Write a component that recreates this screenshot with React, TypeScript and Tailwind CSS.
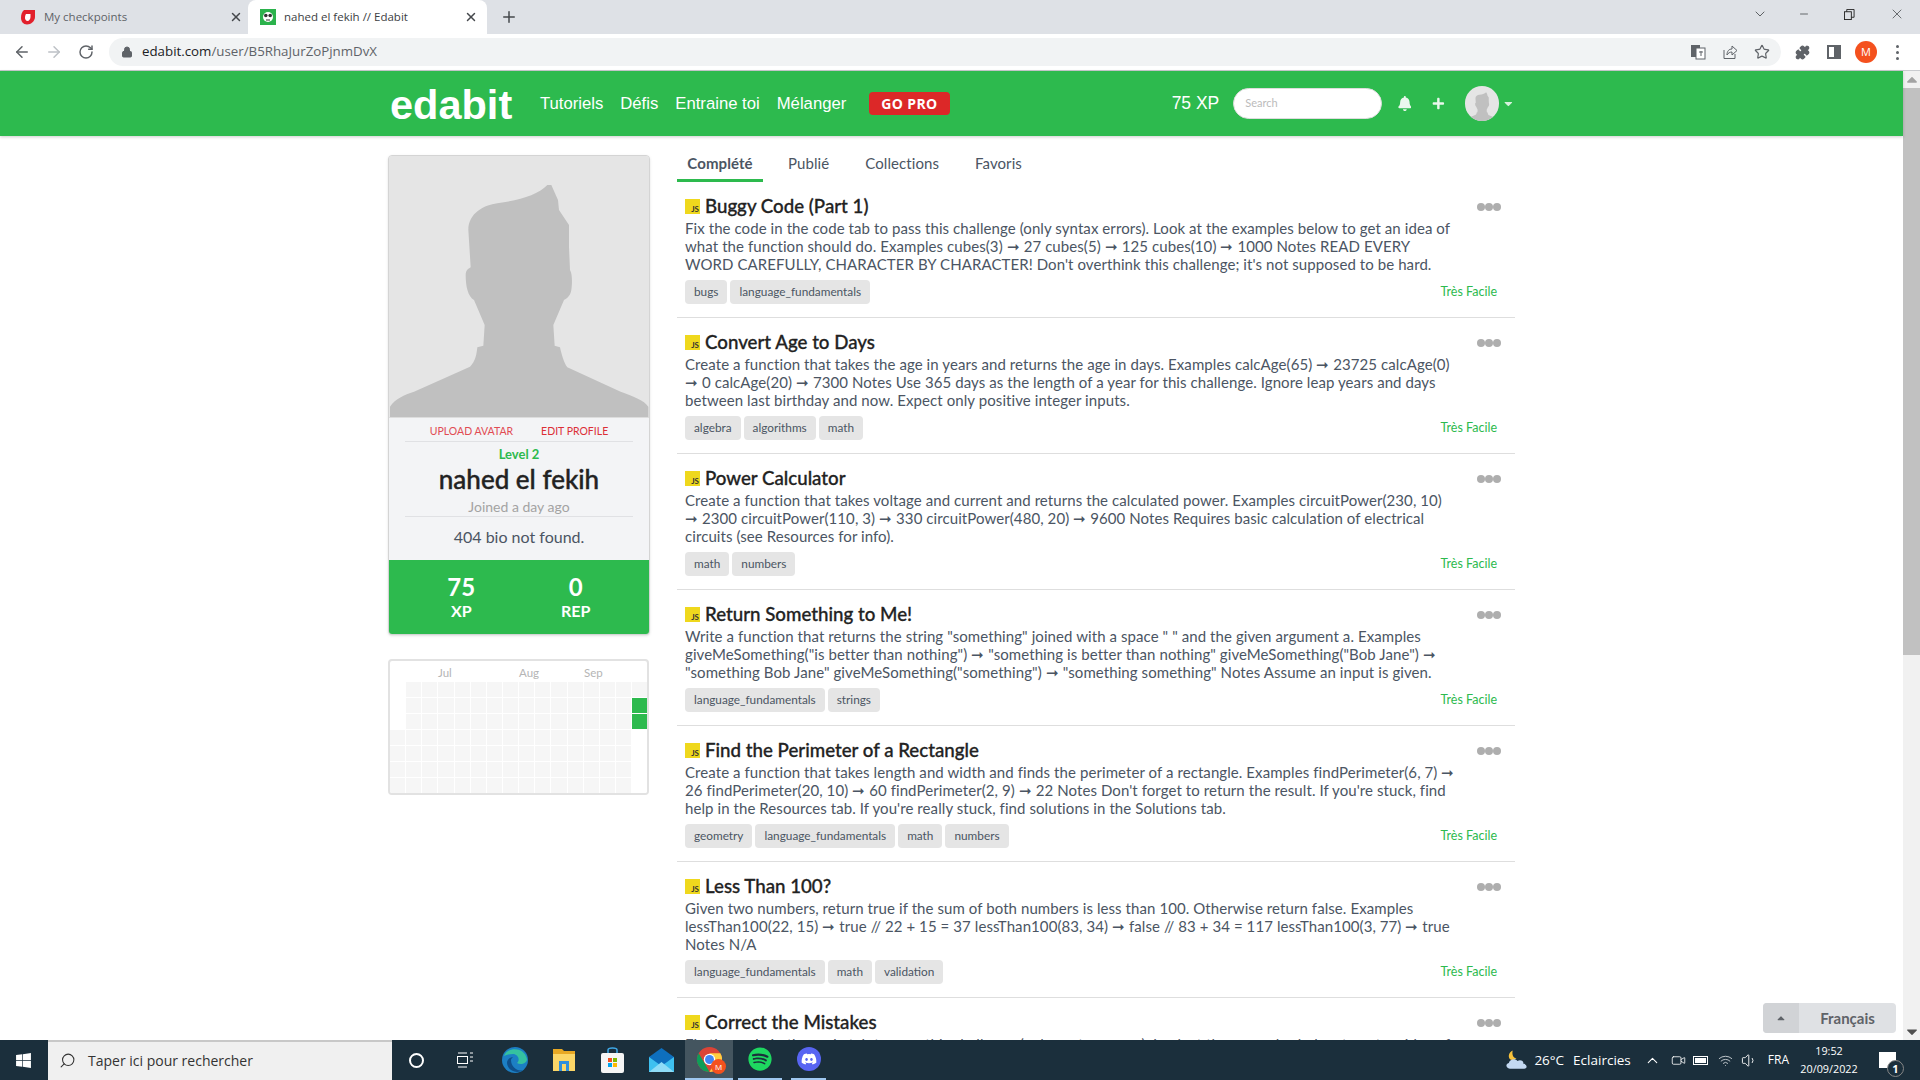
import { ArrowLeft, ArrowRight, RotateCw, Lock, X, Plus, ChevronDown, Minus, Star, Puzzle, Search, ChevronUp, Wifi, Volume1, Video } from 'lucide-react'
import { FaBell, FaPlus, FaWindows, FaSpotify, FaDiscord, FaCaretDown, FaCaretUp } from 'react-icons/fa'

type Challenge = {
    title: string
    description: string
    tags: string[]
}

const challenges: Challenge[] = [
    {
        title: 'Buggy Code (Part 1)',
        description: "Fix the code in the code tab to pass this challenge (only syntax errors). Look at the examples below to get an idea of what the function should do. Examples cubes(3) ➞ 27 cubes(5) ➞ 125 cubes(10) ➞ 1000 Notes READ EVERY WORD CAREFULLY, CHARACTER BY CHARACTER! Don't overthink this challenge; it's not supposed to be hard.",
        tags: ['bugs', 'language_fundamentals'],
    },
    {
        title: 'Convert Age to Days',
        description: 'Create a function that takes the age in years and returns the age in days. Examples calcAge(65) ➞ 23725 calcAge(0) ➞ 0 calcAge(20) ➞ 7300 Notes Use 365 days as the length of a year for this challenge. Ignore leap years and days between last birthday and now. Expect only positive integer inputs.',
        tags: ['algebra', 'algorithms', 'math'],
    },
    {
        title: 'Power Calculator',
        description: 'Create a function that takes voltage and current and returns the calculated power. Examples circuitPower(230, 10) ➞ 2300 circuitPower(110, 3) ➞ 330 circuitPower(480, 20) ➞ 9600 Notes Requires basic calculation of electrical circuits (see Resources for info).',
        tags: ['math', 'numbers'],
    },
    {
        title: 'Return Something to Me!',
        description: 'Write a function that returns the string "something" joined with a space " " and the given argument a. Examples giveMeSomething("is better than nothing") ➞ "something is better than nothing" giveMeSomething("Bob Jane") ➞ "something Bob Jane" giveMeSomething("something") ➞ "something something" Notes Assume an input is given.',
        tags: ['language_fundamentals', 'strings'],
    },
    {
        title: 'Find the Perimeter of a Rectangle',
        description: "Create a function that takes length and width and finds the perimeter of a rectangle. Examples findPerimeter(6, 7) ➞ 26 findPerimeter(20, 10) ➞ 60 findPerimeter(2, 9) ➞ 22 Notes Don't forget to return the result. If you're stuck, find help in the Resources tab. If you're really stuck, find solutions in the Solutions tab.",
        tags: ['geometry', 'language_fundamentals', 'math', 'numbers'],
    },
    {
        title: 'Less Than 100?',
        description: 'Given two numbers, return true if the sum of both numbers is less than 100. Otherwise return false. Examples lessThan100(22, 15) ➞ true // 22 + 15 = 37 lessThan100(83, 34) ➞ false // 83 + 34 = 117 lessThan100(3, 77) ➞ true Notes N/A',
        tags: ['language_fundamentals', 'math', 'validation'],
    },
    {
        title: 'Correct the Mistakes',
        description: 'Fix the code in the code tab to pass this challenge (only syntax errors). Look at the examples below to get an idea of what the function should do.',
        tags: ['bugs'],
    },
]

function Silhouette({ className }: { className?: string }) {
    return (
        <svg viewBox="25 18 780 783" className={className} preserveAspectRatio="none">
            <path
                fill="#c0c0c0"
                d="M28 801 L28 770 C45 745 70 735 100 725 L268 650 C285 635 288 610 290 592 L308 587 L312 525 L280 450 C262 440 255 410 255 375 C255 360 265 355 270 352 L263 240 C263 190 310 165 350 160 C420 150 470 135 500 105 L512 105 L532 150 L535 180 L565 225 L565 290 L568 360 C575 370 575 400 572 420 C570 435 560 445 550 450 L518 525 L522 587 L538 592 C542 610 550 640 560 652 L720 725 C760 740 790 750 803 770 L803 801 Z"
            />
        </svg>
    )
}

function BrowserChrome() {
    return (
        <div className="shrink-0 font-['Open_Sans',sans-serif]">
            <div className="h-[34px] bg-[#dee1e6] flex items-end relative">
                <div className="w-[248px] h-[34px] flex items-center pl-[20px] text-[11.5px] text-[#5f6368]">
                    <svg viewBox="0 0 16 16" className="w-4 h-4 shrink-0">
                        <path fill="#e2202c" d="M4 1 H15 V8 C15 12 11 15.500 7 15.500 C3 15.500 1 12 1 9 C1 5 2 3 4 1 Z" />
                        <path fill="#fff" d="M6 5 H10.500 V8 C10.500 10 9 12 7.500 12 C6 12 5 10.500 5 9 C5 7 5.300 6 6 5 Z" />
                    </svg>
                    <span className="ml-[8px] flex-1">My checkpoints</span>
                    <X className="w-[14px] h-[14px] mr-[5px] text-[#45484c]" strokeWidth={2.5} />
                </div>
                <div className="w-[239px] h-[34px] bg-white rounded-t-lg flex items-center pl-[12px] text-[11.5px] text-[#3c4043]">
                    <svg viewBox="0 0 16 16" className="w-4 h-4 shrink-0">
                        <rect width="16" height="16" fill="#2bb24c" />
                        <circle cx="8" cy="8" r="5" fill="#fff" />
                        <circle cx="5.800" cy="6.500" r="1.800" fill="#333" />
                        <circle cx="10.200" cy="6.500" r="1.800" fill="#333" />
                        <path d="M6 11 H10" stroke="#333" strokeWidth="1" />
                    </svg>
                    <span className="ml-[8px] flex-1">nahed el fekih // Edabit</span>
                    <X className="w-[14px] h-[14px] mr-[9px] text-[#45484c]" strokeWidth={2.5} />
                </div>
                <div className="h-[34px] flex items-center ml-[13px]">
                    <Plus className="w-[18px] h-[18px] text-[#45484c]" strokeWidth={2} />
                </div>
                <div className="flex-1" />
                <div className="h-[34px] flex items-center text-[#3c4043] pb-[6px]">
                    <ChevronDown className="w-[16px] h-[16px] mr-[30px]" strokeWidth={1.2} />
                    <Minus className="w-[12px] h-[12px] mr-[34px]" strokeWidth={1.5} />
                    <svg viewBox="0 0 12 12" className="w-[11px] h-[11px] mr-[34px]" fill="none" stroke="#222">
                        <rect x="0.500" y="3" width="7.500" height="8.500" />
                        <path d="M3 3 V0.500 H11 V9 H8" />
                    </svg>
                    <X className="w-[16px] h-[16px] mr-[15px]" strokeWidth={1.1} />
                </div>
            </div>
            <div className="h-[37px] bg-white flex items-center border-b border-[#c9cbcf]">
                <ArrowLeft className="w-[18px] h-[18px] ml-[13px] text-[#5f6368]" strokeWidth={2} />
                <ArrowRight className="w-[18px] h-[18px] ml-[14px] text-[#bdc1c6]" strokeWidth={2} />
                <RotateCw className="w-[16px] h-[16px] ml-[15px] text-[#5f6368]" strokeWidth={2.2} />
                <div className="ml-[15px] w-[1672px] h-[28px] rounded-full bg-[#f1f3f4] flex items-center pl-[12px] relative">
                    <Lock className="w-[12px] h-[12px] text-[#5f6368] fill-[#5f6368]" />
                    <span className="ml-[9px] text-[13.3px] text-[#5f6368]">
                        <span className="text-[#202124]">edabit.com</span>/user/B5RhaJurZoPjnmDvX
                    </span>
                    <div className="absolute right-[11px] top-0 h-full flex items-center gap-[16px] text-[#5f6368]">
                        <svg viewBox="0 0 16 16" className="w-4 h-4">
                            <rect x="1" y="1" width="9" height="12" fill="#5f6368" />
                            <rect x="6" y="4" width="9" height="11" fill="#fff" stroke="#5f6368" />
                            <path d="M9 8 H13 M11 7 V12" stroke="#5f6368" />
                        </svg>
                        <svg viewBox="0 0 16 16" className="w-4 h-4" fill="none" stroke="#5f6368">
                            <path d="M2 6 V14.500 H13 V10 M5 11 C5 7 7 5 10 5 V2 L15 6.500 L10 11 V8 C8 8 6 9 5 11 Z" />
                        </svg>
                        <Star className="w-[16px] h-[16px]" strokeWidth={1.8} />
                    </div>
                </div>
                <Puzzle className="w-[15px] h-[15px] ml-[14px] text-[#5f6368] fill-[#5f6368]" />
                <div className="w-[14px] h-[14px] ml-[17px] border-2 border-[#5f6368] flex justify-end">
                    <div className="w-[5px] h-full bg-[#5f6368]" />
                </div>
                <div className="w-[22px] h-[22px] ml-[14px] rounded-full bg-[#f4511e] text-white text-[11px] flex items-center justify-center">M</div>
                <div className="ml-[19px] flex flex-col gap-[3px]">
                    <div className="w-[3px] h-[3px] rounded-full bg-[#5f6368]" />
                    <div className="w-[3px] h-[3px] rounded-full bg-[#5f6368]" />
                    <div className="w-[3px] h-[3px] rounded-full bg-[#5f6368]" />
                </div>
            </div>
        </div>
    )
}

function TopNav() {
    return (
        <nav className="h-[65px] shrink-0 bg-[#2dba4e] shadow-[0_1px_3px_rgba(0,0,0,0.2)] flex items-center relative">
            <div className="w-[1127px] mx-auto flex items-center font-['Liberation_Sans',sans-serif] text-white whitespace-nowrap">
                <span className="w-[155px] pl-[2px] pt-[2px] text-[41.500px] leading-none font-bold">edabit</span>
                <div className="flex gap-[17px] text-[16.700px]">
                    <span>Tutoriels</span>
                    <span>Défis</span>
                    <span>Entraine toi</span>
                    <span>Mélanger</span>
                </div>
                <span className="ml-[23px] w-[82px] h-[23px] rounded bg-[#dc2828] font-['Open_Sans',sans-serif] text-[14px] font-bold tracking-wide flex items-center justify-center">GO PRO</span>
                <span className="ml-[222px] text-[17.500px]">75 XP</span>
                <div className="ml-[14px] w-[151px] h-[31px] rounded-full bg-white border border-[#ddd] flex items-center pl-[11px] font-['Lato',sans-serif] text-[11px] text-[#bbb]">Search</div>
                <FaBell className="ml-[16px] w-[14px] h-[15px] text-[#eaf7ed]" />
                <FaPlus className="ml-[21px] w-[13px] h-[13px] text-[#eaf7ed]" />
                <div className="ml-[20px] w-[35px] h-[35px] rounded-full bg-[#e5e5e5] overflow-hidden flex items-end">
                    <Silhouette className="w-full h-[32px]" />
                </div>
                <FaCaretDown className="ml-[3px] w-[13px] h-[13px] text-[#d5f1dc]" />
            </div>
        </nav>
    )
}

function ProfileCard() {
    return (
        <div className="w-[262px] rounded border border-[#d4d4d4] bg-[#f3f4f6] overflow-hidden shadow-sm">
            <div className="h-[262px] bg-[#e5e5e5] border-b border-[#ddd]">
                <Silhouette className="w-full h-full" />
            </div>
            <div className="flex justify-center gap-[28px] pt-[7px] h-[23px] text-[10.5px] leading-[13px] text-[#e14b52]">
                <span>UPLOAD AVATAR</span>
                <span className="text-[#dc2f36]">EDIT PROFILE</span>
            </div>
            <div className="mx-4 border-t border-[#e0e1e4] text-center">
                <div className="mt-[4px] text-[13px] leading-[17px] font-bold text-[#2dba4e]">Level 2</div>
                <div className="text-[26px] leading-[32px] font-medium text-[#222] [-webkit-text-stroke:0.4px_#222]">nahed el fekih</div>
                <div className="mt-[3px] text-[14px] leading-[18px] text-[#a3a3a3]">Joined a day ago</div>
            </div>
            <div className="mx-4 border-t border-[#e0e1e4] text-center text-[16px] leading-[20px] text-[#4b5563] pt-[10px] pb-[13px]">404 bio not found.</div>
            <div className="h-[74px] bg-[#2dba4e] grid grid-cols-2 text-white font-bold text-center pl-[15px] pr-[16px] pt-[13px]">
                <div>
                    <div className="text-[24px] leading-[28px]">75</div>
                    <div className="text-[16px] leading-[19px]">XP</div>
                </div>
                <div>
                    <div className="text-[24px] leading-[28px]">0</div>
                    <div className="text-[16px] leading-[19px]">REP</div>
                </div>
            </div>
        </div>
    )
}

function Heatmap() {
    const cells = Array.from({ length: 16 * 7 }, (_, i) => i)

    return (
        <div className="mt-[24px] w-[261px] h-[136px] rounded border-2 border-[#e2e2e2] relative overflow-hidden">
            <div className="h-[21px] relative text-[11.500px] leading-[24px] text-[#b5b5b5]">
                <span className="absolute left-[48px]">Jul</span>
                <span className="absolute left-[129px]">Aug</span>
                <span className="absolute left-[194px]">Sep</span>
            </div>
            <div className="grid grid-cols-[repeat(16,15.15px)] auto-rows-[15px] gap-px">
                {cells.map((i) => {
                    const col = i % 16
                    const row = Math.floor(i / 16)
                    const empty = (col === 0 && row < 3) || (col === 15 && row > 2)
                    const done = col === 15 && (row === 1 || row === 2)
                    return (
                        <div
                            key={i}
                            className={empty ? 'bg-white' : done ? 'bg-[#2dba4e]' : 'bg-[#f6f6f6]'}
                        />
                    )
                })}
            </div>
        </div>
    )
}

function ChallengeRow({ challenge }: { challenge: Challenge }) {
    return (
        <div className="h-[136px] shrink-0 border-b border-[#dedede] px-2 pt-[12px] relative">
            <div className="flex items-center h-[24px]">
                <div className="w-[15px] h-[15px] bg-[#efd81d] flex items-end justify-end pr-px text-[8px] leading-[10px] font-bold text-[#333]">JS</div>
                <span className="ml-[5px] text-[18.700px] leading-[24px] font-medium text-[#222] [-webkit-text-stroke:0.3px_#222]">{challenge.title}</span>
            </div>
            <div className="absolute right-[14px] top-[21px] flex">
                <div className="w-[8px] h-[8px] rounded-full bg-[#aeaeae]" />
                <div className="w-[8px] h-[8px] rounded-full bg-[#aeaeae]" />
                <div className="w-[8px] h-[8px] rounded-full bg-[#aeaeae]" />
            </div>
            <p className="w-[770px] mt-[1px] text-[15px] leading-[18px] tracking-[0.08px] text-[#4b5563]">{challenge.description}</p>
            <div className="mt-[7px] flex items-center">
                <div className="flex gap-[3px]">
                    {challenge.tags.map((tag) => (
                        <span key={tag} className="h-[24px] px-[9px] rounded bg-[#e5e5e5] text-[11.800px] leading-[24px] text-[#4b5563]">{tag}</span>
                    ))}
                </div>
                <span className="ml-auto mr-[10px] text-[12.500px] text-[#2dba4e]">Très Facile</span>
            </div>
        </div>
    )
}

function Scrollbar() {
    return (
        <div className="w-[17px] shrink-0 bg-[#f1f1f1] flex flex-col items-center">
            <FaCaretUp className="w-[12px] h-[17px] text-[#a3a3a3]" />
            <div className="w-full h-[567px] bg-[#c1c1c1]" />
            <div className="flex-1" />
            <FaCaretDown className="w-[12px] h-[17px] text-[#505050]" />
        </div>
    )
}

function Taskbar() {
    return (
        <div className="h-[40px] shrink-0 bg-[#1b2f3c] flex items-center text-white font-['Open_Sans',sans-serif] relative">
            <FaWindows className="ml-[15px] w-[17px] h-[17px]" />
            <div className="ml-[16px] w-[344px] h-[40px] bg-[#f0f0f0] border-t-2 border-[#c8c8c8] pb-[2px] flex items-center text-[#333] text-[14px]">
                <Search className="ml-[11px] w-[17px] h-[17px] -scale-x-100" strokeWidth={1.5} />
                <span className="ml-[12px]">Taper ici pour rechercher</span>
            </div>
            <div className="ml-[17px] w-[15px] h-[15px] rounded-full border-[2.5px] border-white" />
            <svg viewBox="0 0 18 16" className="ml-[31px] w-[18px] h-[16px]" fill="none" stroke="#fff">
                <path d="M3 1 H12 M3 15 H12 M15 1 H18 M15 5 H18 M15 9 H18" />
                <rect x="2.500" y="4.500" width="10" height="7" />
            </svg>
            <svg viewBox="0 0 26 26" className="ml-[29px] w-[26px] h-[26px]">
                <circle cx="13" cy="13" r="13" fill="#1c7fc4" />
                <path fill="#35c1a0" d="M2 9 C5 0 22 -1 25 12 C25 17 18 18 15 16 C19 12 15 7 11 7 C7 7 4 8 2 9 Z" />
                <path fill="#0f4f8a" d="M9 13 C9 20 16 25 21 23 C16 27 6 25 5 16 C5 12 9 10 11 10 C10 11 9 12 9 13 Z" />
            </svg>
            <svg viewBox="0 0 22 24" className="ml-[25px] w-[22px] h-[24px]">
                <path fill="#e8a824" d="M0 1 H9 L11 3 H22 V23 H0 Z" />
                <path fill="#fcd667" d="M0 6 H22 V23 H0 Z" />
                <rect x="6" y="13" width="10" height="10" fill="#2f8fdd" />
                <rect x="9" y="16" width="4" height="7" fill="#fcd667" />
            </svg>
            <svg viewBox="0 0 23 26" className="ml-[26px] w-[23px] h-[26px]">
                <path d="M7 7 V3 C7 1 9 1 11.500 1 C14 1 16 1 16 3 V7" fill="none" stroke="#3fa9e8" strokeWidth="1.500" />
                <rect y="6" width="23" height="20" rx="2" fill="#f5f5f5" />
                <rect x="7" y="11" width="4" height="4" fill="#f25022" />
                <rect x="12" y="11" width="4" height="4" fill="#7fba00" />
                <rect x="7" y="16" width="4" height="4" fill="#00a4ef" />
                <rect x="12" y="16" width="4" height="4" fill="#ffb900" />
            </svg>
            <svg viewBox="0 0 25 24" className="ml-[25px] w-[25px] h-[24px]">
                <path fill="#0e6fbe" d="M12.500 0 L25 9 V24 H0 V9 Z" />
                <path fill="#3ec0f0" d="M0 9 L12.500 18 L25 9 V24 H0 Z" />
                <path fill="#8fdcf7" d="M0 24 L12.500 14 L25 24 Z" />
            </svg>
            <div className="ml-[11px] w-[48px] h-[40px] bg-[#44555f] border-b-2 border-[#9fc7ef] flex items-center justify-center relative">
                <svg viewBox="0 0 24 24" className="w-[25px] h-[25px]">
                    <circle cx="12" cy="12" r="12" fill="#db4437" />
                    <path fill="#0f9d58" d="M12 24 A12 12 0 0 1 1.600 6 L7 15 L12 24 Z" />
                    <path fill="#ffcd40" d="M12 6 H22.400 A12 12 0 0 1 12 24 L17 15 Z" />
                    <circle cx="12" cy="12" r="5.500" fill="#fff" />
                    <circle cx="12" cy="12" r="4.300" fill="#4285f4" />
                </svg>
                <div className="absolute right-[7px] bottom-[4px] w-[15px] h-[15px] rounded-full bg-[#f4511e] text-[8px] flex items-center justify-center">M</div>
            </div>
            <div className="ml-[5px] w-[44px] h-[40px] border-b-2 border-[#9fc7ef] flex items-center justify-center">
                <FaSpotify className="w-[24px] h-[24px] text-[#1ed760]" />
            </div>
            <div className="ml-[9px] w-[35px] h-[40px] border-b-2 border-[#9fc7ef] flex items-center justify-center">
                <div className="w-[24px] h-[24px] rounded-full bg-[#5865f2] flex items-center justify-center">
                    <FaDiscord className="w-[16px] h-[16px]" />
                </div>
            </div>
            <div className="flex-1" />
            <svg viewBox="0 0 24 20" className="w-[23px] h-[20px]">
                <path fill="#f8c23c" d="M8 0 C4 2 3 6 5 9 C7 11 10 10 12 8 C9 8 7 5 8 0 Z" />
                <path fill="#c3d9f2" d="M5 19 C1 19 0 14 4 13 C5 9 11 8 13 11 C17 9 20 12 19 14 C23 14 24 19 20 19 Z" />
            </svg>
            <span className="ml-[6px] text-[13.500px]">26°C</span>
            <span className="ml-[9px] text-[13.500px]">Eclaircies</span>
            <ChevronUp className="ml-[13px] w-[17px] h-[17px]" strokeWidth={1.5} />
            <Video className="ml-[10px] w-[15px] h-[15px]" strokeWidth={1.3} />
            <svg viewBox="0 0 16 10" className="ml-[7px] w-[16px] h-[10px]">
                <rect x="0.500" y="1.500" width="14" height="8" fill="none" stroke="#fff" />
                <rect x="2" y="3" width="11" height="5" fill="#fff" />
            </svg>
            <Wifi className="ml-[9px] w-[15px] h-[15px] text-[#c8ced2]" strokeWidth={1.5} />
            <Volume1 className="ml-[8px] w-[17px] h-[17px]" strokeWidth={1.3} />
            <span className="ml-[10px] text-[12px]">FRA</span>
            <div className="ml-[5px] w-[70px] text-center text-[10.800px] leading-[18px]">
                <div>19:52</div>
                <div>20/09/2022</div>
            </div>
            <div className="ml-[15px] mr-[24px] w-[17px] h-[16px] bg-white relative">
                <div className="absolute -right-[8px] top-[8px] w-[17px] h-[17px] rounded-full bg-[#1b2f3c] border border-[#888] text-[11px] leading-[15px] text-center font-bold">1</div>
            </div>
        </div>
    )
}

export default function App() {
    return (
        <div className="w-full h-screen flex flex-col overflow-hidden bg-white font-['Lato',sans-serif]">
            <BrowserChrome />
            <div className="flex-1 min-h-0 flex">
                <div className="flex-1 min-w-0 flex flex-col relative">
                    <TopNav />
                    <div className="flex-1 min-h-0 overflow-hidden">
                        <div className="w-[1127px] mx-auto flex gap-[27px] pt-[19px]">
                            <aside className="w-[262px] shrink-0">
                                <ProfileCard />
                                <Heatmap />
                            </aside>
                            <main className="w-[838px] shrink-0">
                                <div className="h-[30px] flex text-[15px] tracking-[0.08px] text-[#4b5563] -mt-[3px]">
                                    <span className="w-[86px] h-[30px] text-center font-bold border-b-[3px] border-[#2dba4e]">Complété</span>
                                    <span className="ml-[25px]">Publié</span>
                                    <span className="ml-[36px]">Collections</span>
                                    <span className="ml-[36px]">Favoris</span>
                                </div>
                                {challenges.map((challenge) => (
                                    <ChallengeRow key={challenge.title} challenge={challenge} />
                                ))}
                            </main>
                        </div>
                    </div>
                    <div className="absolute right-[7px] bottom-[7px] w-[133px] h-[30px] rounded bg-[#dfe1e4] flex items-center overflow-hidden text-[15px] font-bold text-[#5f6368]">
                        <div className="w-[36px] h-full bg-[#d1d3d6] flex items-center justify-center">
                            <FaCaretUp className="w-[12px] h-[12px]" />
                        </div>
                        <span className="flex-1 text-center">Français</span>
                    </div>
                </div>
                <Scrollbar />
            </div>
            <Taskbar />
        </div>
    )
}
